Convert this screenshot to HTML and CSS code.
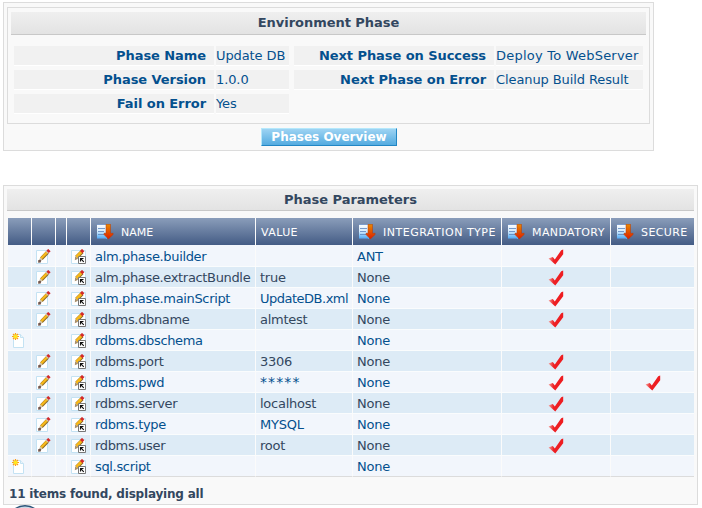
FILE: index.html
```
<!DOCTYPE html>
<html lang="en">
<head>
<meta charset="utf-8">
<title>Environment Phase</title>
<link rel="stylesheet" href="styles.css">
</head>
<body>
<svg class="defs" aria-hidden="true">
  <defs>
    <linearGradient id="pageFill" x1="0" y1="0" x2="0" y2="1"><stop offset="0" stop-color="#fff"/><stop offset=".5" stop-color="#d3eafc"/><stop offset="1" stop-color="#42a5f5"/></linearGradient>
    <linearGradient id="arrowFill" x1="0" y1="0" x2="0" y2="1"><stop offset="0" stop-color="#e88a00"/><stop offset="1" stop-color="#dd1d00"/></linearGradient>
    <linearGradient id="checkFill" x1="0" y1="0" x2="1" y2="0"><stop offset="0" stop-color="#f4a09c"/><stop offset=".35" stop-color="#ed2024"/><stop offset="1" stop-color="#ee1c20"/></linearGradient>
    <symbol id="sort" viewBox="0 0 17 16">
      <path fill="url(#pageFill)" d="M0 0h10v15H0z"/>
      <path stroke="#5b83bd" stroke-opacity=".8" d="M0 .5h10M1 4.5h7M1 7.5h6M1 10.5h6M0 14.5h9"/>
      <path fill="url(#arrowFill)" stroke="#b63b08" stroke-width=".5" d="M9 .3h4.5v9h2.6v1.3L11.4 15 7 10.6V9.3h2z"/>
    </symbol>
    <symbol id="edit" viewBox="0 0 16 16">
      <path fill="#fff" stroke="#c4e2f3" d="M.5 1.5h11v13H.5z"/>
      <path stroke="#8a6520" stroke-width="3.6" d="M5.3 9.8L11.6 3.2"/>
      <path stroke="#f7b91c" stroke-width="2.4" d="M5.1 9.5L11.4 2.9"/>
      <path stroke="#c8c8c0" stroke-width="3.2" d="M10.9 3.6l.8-.8"/>
      <path stroke="#d32a2a" stroke-width="3.4" d="M11.6 2.9l1.8-1.8"/>
      <path stroke="#d8c9a8" stroke-width="2.6" d="M4.2 10.9l1.4-1.4"/>
      <path fill="#73584f" d="M2.2 11.2L4 10.4l1.3 1.2-.6 1.8-2.5.4z"/>
    </symbol>
    <symbol id="edit-link" viewBox="0 0 16 16">
      <path fill="#fff" stroke="#c4e2f3" d="M.5 1.5h14v13H.5z"/>
      <path stroke="#8a6520" stroke-width="4" d="M5.7 8.1L11 2.8"/>
      <path stroke="#f7b91c" stroke-width="2.8" d="M5.4 7.9L10.8 2.5"/>
      <path stroke="#d32a2a" stroke-width="3.4" d="M10.2 3.1l2-2"/>
      <path fill="#a88f6a" d="M4.2 7.2l3 2.6-3.4 1.4z"/>
      <path fill="#fff" stroke="#777" d="M7.5 7.5h7v7h-7z"/>
      <path fill="none" stroke="#111" stroke-width="1.1" d="M9.5 12.5v-3h3M10 10l2.8 2.8"/>
    </symbol>
    <symbol id="new" viewBox="0 0 16 16">
      <path fill="#fff" stroke="#c4e2f3" d="M1.5 1.5h7l3 3v10h-10z"/>
      <path fill="#eaf5fb" stroke="#c4e2f3" d="M8.5 1.5v3h3"/>
      <path stroke="#ff9d16" stroke-width="1.2" d="M3.5 0v7M0 3.5h7M1 1l5 5M6 1L1 6"/>
      <circle cx="3.5" cy="3.5" r="1.9" fill="#ffe81f"/>
    </symbol>
    <symbol id="check" viewBox="0 0 16 16">
      <path fill="url(#checkFill)" d="M.5 9.4L4.8 8l2 2.6L13.2 1.2 15.2.6v4.6L7.3 15.4z"/>
    </symbol>
  </defs>
</svg>

<section class="panel phase">
  <div class="fieldset">
    <h2>Environment Phase</h2>
    <div class="fields">
      <b>Phase Name</b><span>Update DB</span><b class="second">Next Phase on Success</b><span class="wide">Deploy To WebServer</span>
      <b>Phase Version</b><span>1.0.0</span><b class="second">Next Phase on Error</b><span>Cleanup Build Result</span>
      <b>Fail on Error</b><span>Yes</span>
    </div>
  </div>
  <a class="button">Phases Overview</a>
</section>

<section class="panel params">
  <h2>Phase Parameters</h2>
  <table>
    <colgroup><col class="c1"><col class="c2"><col class="c3"><col class="c4"><col class="c5"><col class="c6"><col class="c7"><col class="c8"><col class="c9"></colgroup>
    <thead>
      <tr><th></th><th></th><th></th><th></th>
        <th class="name"><div><svg><use href="#sort"/></svg><span>NAME</span></div></th>
        <th><div><span>VALUE</span></div></th>
        <th class="type"><div><svg><use href="#sort"/></svg><span>INTEGRATION TYPE</span></div></th>
        <th><div><svg><use href="#sort"/></svg><span>MANDATORY</span></div></th>
        <th><div><svg><use href="#sort"/></svg><span>SECURE</span></div></th></tr>
    </thead>
    <tbody>
      <tr><td></td><td><svg><use href="#edit"/></svg></td><td></td><td><svg><use href="#edit-link"/></svg></td><td>alm.phase.builder</td><td></td><td>ANT</td><td class="mark"><svg><use href="#check"/></svg></td><td></td></tr>
      <tr><td></td><td><svg><use href="#edit"/></svg></td><td></td><td><svg><use href="#edit-link"/></svg></td><td>alm.phase.extractBundle</td><td>true</td><td>None</td><td class="mark"><svg><use href="#check"/></svg></td><td></td></tr>
      <tr><td></td><td><svg><use href="#edit"/></svg></td><td></td><td><svg><use href="#edit-link"/></svg></td><td>alm.phase.mainScript</td><td class="file">UpdateDB.xml</td><td>None</td><td class="mark"><svg><use href="#check"/></svg></td><td></td></tr>
      <tr><td></td><td><svg><use href="#edit"/></svg></td><td></td><td><svg><use href="#edit-link"/></svg></td><td>rdbms.dbname</td><td>almtest</td><td>None</td><td class="mark"><svg><use href="#check"/></svg></td><td></td></tr>
      <tr><td><svg><use href="#new"/></svg></td><td></td><td></td><td><svg><use href="#edit-link"/></svg></td><td>rdbms.dbschema</td><td></td><td>None</td><td></td><td></td></tr>
      <tr><td></td><td><svg><use href="#edit"/></svg></td><td></td><td><svg><use href="#edit-link"/></svg></td><td>rdbms.port</td><td>3306</td><td>None</td><td class="mark"><svg><use href="#check"/></svg></td><td></td></tr>
      <tr><td></td><td><svg><use href="#edit"/></svg></td><td></td><td><svg><use href="#edit-link"/></svg></td><td>rdbms.pwd</td><td class="secret">*****</td><td>None</td><td class="mark"><svg><use href="#check"/></svg></td><td class="mark"><svg><use href="#check"/></svg></td></tr>
      <tr><td></td><td><svg><use href="#edit"/></svg></td><td></td><td><svg><use href="#edit-link"/></svg></td><td>rdbms.server</td><td>localhost</td><td>None</td><td class="mark"><svg><use href="#check"/></svg></td><td></td></tr>
      <tr><td></td><td><svg><use href="#edit"/></svg></td><td></td><td><svg><use href="#edit-link"/></svg></td><td>rdbms.type</td><td>MYSQL</td><td>None</td><td class="mark"><svg><use href="#check"/></svg></td><td></td></tr>
      <tr><td></td><td><svg><use href="#edit"/></svg></td><td></td><td><svg><use href="#edit-link"/></svg></td><td>rdbms.user</td><td>root</td><td>None</td><td class="mark"><svg><use href="#check"/></svg></td><td></td></tr>
      <tr><td><svg><use href="#new"/></svg></td><td></td><td></td><td><svg><use href="#edit-link"/></svg></td><td>sql.script</td><td></td><td>None</td><td></td><td></td></tr>
    </tbody>
  </table>
  <p class="summary">11 items found, displaying all</p>
</section>
<svg class="round" viewBox="0 0 36 3"><circle cx="18" cy="18" r="17.3" fill="#c9d9e6" stroke="#2b5478" stroke-width="1.4"/></svg>
</body>
</html>
```
FILE: styles.css
```
* { box-sizing: border-box; }
body {
  margin: 0;
  padding: 2px 0 0 3px;
  height: 508px;
  overflow: hidden;
  background: #fff;
  font: 13px/19px "DejaVu Sans", Verdana, sans-serif;
  color: #33475f;
}
.defs { position: absolute; width: 0; height: 0; }
.panel { background: #f9f9f9; border: 1px solid #dcdcdc; }
h2 {
  margin: 0;
  height: 23px;
  font-size: 13px;
  line-height: 21px;
  letter-spacing: -.03px;
  text-align: center;
  background: linear-gradient(#efefef, #e3e3e3);
  border-bottom: 1px solid #c8c8c8;
}

.phase { width: 651px; height: 149px; padding: 4px 3px 0; }
.fieldset { width: 643px; height: 117px; padding: 4px 3px 0; border: 1px solid #dcdcdc; }
.fields {
  display: grid;
  grid-template-columns: 200px 73px 203px 147px;
  grid-auto-rows: 20px;
  column-gap: 2px;
  row-gap: 4px;
  padding: 11px 0 0 3px;
  color: #04508e;
}
.fields > * { background: #f1f1f1; border-bottom: 1px solid #fff; white-space: nowrap; }
.fields span { letter-spacing: -.1px; }
.fields .wide { letter-spacing: .22px; }
.fields b { padding-right: 8px; text-align: right; letter-spacing: -.07px; }
.fields .second { margin-left: 3px; }
.button {
  display: block;
  width: 136px;
  height: 18px;
  margin: 4px 0 0 254px;
  border: 1px solid;
  border-color: #b5e8fb #2186c4 #2186c4 #b5e8fb;
  background: linear-gradient(#9dd3f3, #54abe0);
  color: #fff;
  font-size: 12px;
  font-weight: bold;
  line-height: 17px;
  text-align: center;
}

.params { width: 695px; height: 320px; margin-top: 34px; padding: 3px 3px 0; }
.params h2 { height: 22px; }
table { width: 686px; margin: 7px 0 0 1px; border-collapse: separate; border-spacing: 0; table-layout: fixed; }
th, td { padding: 0; height: 21px; border-right: 1px solid #fbfbfb; border-bottom: 1px solid #fafcfd; white-space: nowrap; }
th:last-child, td:last-child { border-right: 0; }
.c1, .c2, .c4 { width: 24px; }
.c3 { width: 11px; }
.c5 { width: 165px; }
.c6 { width: 97px; }
.c7 { width: 149px; }
.c8 { width: 109px; }
.c9 { width: 83px; }
th {
  height: 27px;
  border-bottom: 0;
  background: linear-gradient(#8a9dba, #445c85);
  background-clip: padding-box;
  color: #fff;
  font-size: 11px;
  font-weight: normal;
  letter-spacing: .4px;
}
th.name { letter-spacing: 0; }
th.type { letter-spacing: .5px; }
th div { display: flex; align-items: center; gap: 7px; padding: 1px 0 0 5px; }
th svg { width: 17px; height: 16px; flex: none; margin-left: 1px; }
td svg { display: block; width: 16px; height: 16px; margin: 2px 0 0 4px; }
td.mark svg { margin: 2px auto 0; }
td {
  padding: 1px 0 0 4px;
  background: #f2f6fc;
  color: #04508e;
  line-height: 19px;
  letter-spacing: -.25px;
}
td:nth-child(5) { letter-spacing: -.34px; }
td:nth-child(-n+4), td.mark { padding: 0; }
td.secret { font-size: 14px; letter-spacing: 1.1px; }
td.file { letter-spacing: -.5px; }
tbody tr:nth-child(even) td { background: #ddebf6; color: #33475f; }
tbody tr:first-child td { height: 22px; }
tbody tr:last-child td { border-bottom-color: #dcdcdc; }
.summary { margin: 7px 0 0 2px; font-size: 12px; font-weight: bold; line-height: 20px; letter-spacing: -.2px; }
.round { display: block; width: 36px; height: 3px; margin: 0 0 0 4px; }
```
